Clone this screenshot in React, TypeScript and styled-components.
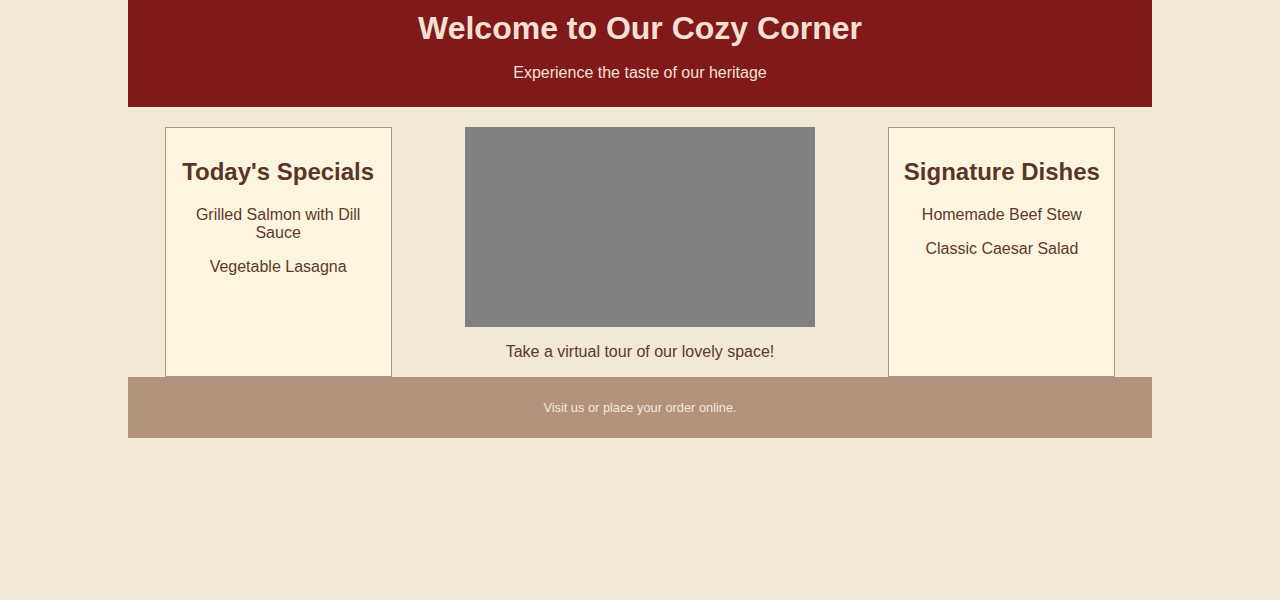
import React from "react";
import styled, { createGlobalStyle } from "styled-components";

const Global = createGlobalStyle`
  html, body { margin: 0; padding: 0; }
  body {
    background: #f1e8d5;
    font-family: "Liberation Sans", Arial, sans-serif;
    color: #5c392a;
  }
`;

const Page = styled.div`
  width: 1024px;
  margin: 0 auto;
`;

const Header = styled.header`
  background: #801919;
  color: #f6e0d4;
  text-align: center;
  padding: 10px;
`;

const Title = styled.h1`
  margin: 0;
  font-size: 32px;
  font-weight: bold;
`;

const Subtitle = styled.p`
  margin: 16.5px 0 15.5px;
  font-size: 16px;
`;

const Main = styled.main`
  display: flex;
  justify-content: space-around;
  padding-top: 20px;
`;

const Card = styled.section`
  width: 204.8px;
  padding: 10px;
  background: #fef5e0;
  border: 1px solid #b39482;
  text-align: center;
`;

const CardTitle = styled.h2`
  margin: 19.92px 0;
  font-size: 24px;
  font-weight: bold;
  color: #5a3526;
`;

const Item = styled.p`
  margin: 16px 0;
  font-size: 16px;
`;

const Tour = styled.div`
  width: 350px;
  display: flex;
  flex-direction: column;
  align-items: center;
`;

const Video = styled.div`
  width: 350px;
  height: 200px;
  background: #808080;
`;

const Caption = styled.p`
  margin: 16px 0;
  font-size: 16px;
  text-align: center;
`;

const Footer = styled.footer`
  background: #b0927d;
  color: #f8e8da;
  text-align: center;
  padding: 10px;
`;

const FooterText = styled.p`
  margin: 12.8px 0;
  font-size: 12.8px;
`;

export default function App() {
  return (
    <>
      <Global />
      <Page>
        <Header>
          <Title>Welcome to Our Cozy Corner</Title>
          <Subtitle>Experience the taste of our heritage</Subtitle>
        </Header>
        <Main>
          <Card>
            <CardTitle>Today's Specials</CardTitle>
            <Item>Grilled Salmon with Dill Sauce</Item>
            <Item>Vegetable Lasagna</Item>
          </Card>
          <Tour>
            <Video />
            <Caption>Take a virtual tour of our lovely space!</Caption>
          </Tour>
          <Card>
            <CardTitle>Signature Dishes</CardTitle>
            <Item>Homemade Beef Stew</Item>
            <Item>Classic Caesar Salad</Item>
          </Card>
        </Main>
        <Footer>
          <FooterText>Visit us or place your order online.</FooterText>
        </Footer>
      </Page>
    </>
  );
}
